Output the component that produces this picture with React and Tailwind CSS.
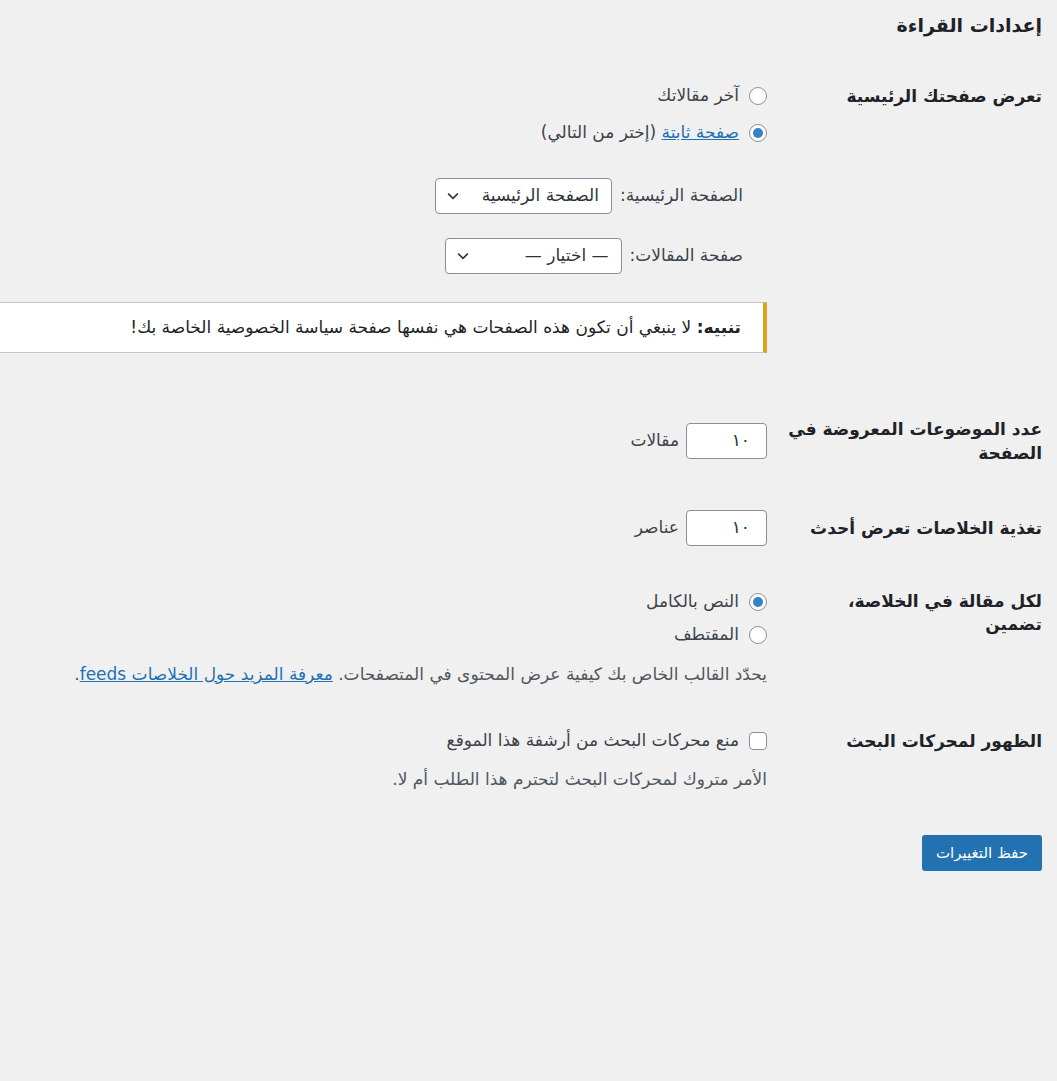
import { useState } from "react";

function Radio({ checked }) {
  return (
    <span className="w-[18px] h-[18px] shrink-0 rounded-full border border-[#8c8f94] bg-white flex items-center justify-center">
      {checked && <span className="w-[10px] h-[10px] rounded-full bg-[#3582c4]"></span>}
    </span>
  );
}

function Chevron() {
  return (
    <svg className="w-[16px] h-[16px]" viewBox="0 0 20 20" fill="none" stroke="#2c3338" strokeWidth={2}>
      <path d="M4 7l6 6 6-6" />
    </svg>
  );
}

function Select({ value, width }) {
  return (
    <div
      className={`h-[36px] ${width} border border-[#8c8f94] rounded-[4px] bg-white flex items-center justify-between pr-[12px] pl-[9px] text-[#2c3338]`}
    >
      <span>{value}</span>
      <Chevron />
    </div>
  );
}

export default function App() {
  const [front, setFront] = useState("page");

  return (
    <div
      dir="rtl"
      className="min-h-[1081px] bg-[#f0f0f1] pr-[15px] text-[17px] text-[#3c434a] font-['DejaVu_Sans',sans-serif]"
    >
      {/* Header */}
      <div className="pt-[10px]">
        <h1 className="h-[30px] leading-[30px] text-[19px] font-bold text-[#1d2327]">إعدادات القراءة</h1>
      </div>

      {/* Row: front page */}
      <div className="flex mt-[44px]">
        <div className="w-[264px] shrink-0 pl-[10px] leading-[24px] font-bold text-[#1d2327]">
          تعرض صفحتك الرئيسية
        </div>
        <div className="flex-1 pr-[11px]">
          <label className="h-[24px] flex items-center gap-[10px]" onClick={() => setFront("posts")}>
            <Radio checked={front === "posts"} />
            <span>آخر مقالاتك</span>
          </label>
          <label className="h-[24px] mt-[13px] flex items-center gap-[10px]" onClick={() => setFront("page")}>
            <Radio checked={front === "page"} />
            <span>
              <a className="text-[#2271b1] underline">صفحة ثابتة</a> (إختر من التالي)
            </span>
          </label>

          <div className="pr-[24px]">
            <div className="mt-[33px] flex items-center gap-[8px]">
              <span>الصفحة الرئيسية:</span>
              <Select value="الصفحة الرئيسية" width="w-[177px]" />
            </div>
            <div className="mt-[24px] flex items-center gap-[8px]">
              <span>صفحة المقالات:</span>
              <Select value="— اختيار —" width="w-[177px]" />
            </div>
          </div>

          <div className="mt-[28px] h-[51px] bg-white border-y border-[#c3c4c7] border-r-[4px] border-r-[#dba617] flex items-center pr-[22px] text-[#1d2327]">
            <p>
              <strong>تنبيه:</strong> لا ينبغي أن تكون هذه الصفحات هي نفسها صفحة سياسة الخصوصية الخاصة بك!
            </p>
          </div>
        </div>
      </div>

      {/* Row: posts per page */}
      <div className="flex mt-[64px]">
        <div className="w-[264px] shrink-0 pl-[10px] leading-[24px] font-bold text-[#1d2327]">
          عدد الموضوعات المعروضة في الصفحة
        </div>
        <div className="flex-1 pr-[11px] pt-[6px]">
          <div className="flex items-center gap-[7px]">
            <div className="w-[81px] h-[36px] border border-[#8c8f94] rounded-[4px] bg-white flex items-center pr-[16px] text-[#2c3338]">
              ١٠
            </div>
            <span>مقالات</span>
          </div>
        </div>
      </div>

      {/* Row: feed items */}
      <div className="flex mt-[45px]">
        <div className="w-[264px] shrink-0 pl-[10px] pt-[6px] leading-[24px] font-bold text-[#1d2327]">
          تغذية الخلاصات تعرض أحدث
        </div>
        <div className="flex-1 pr-[11px]">
          <div className="flex items-center gap-[7px]">
            <div className="w-[81px] h-[36px] border border-[#8c8f94] rounded-[4px] bg-white flex items-center pr-[16px] text-[#2c3338]">
              ١٠
            </div>
            <span>عناصر</span>
          </div>
        </div>
      </div>

      {/* Row: feed content */}
      <div className="flex mt-[44px]">
        <div className="w-[264px] shrink-0 pl-[10px] leading-[23px] font-bold text-[#1d2327]">
          لكل مقالة في الخلاصة، تضمين
        </div>
        <div className="flex-1 pr-[11px]">
          <label className="h-[24px] flex items-center gap-[10px]">
            <Radio checked />
            <span>النص بالكامل</span>
          </label>
          <label className="h-[24px] mt-[9px] flex items-center gap-[10px]">
            <Radio />
            <span>المقتطف</span>
          </label>
          <p className="mt-[15px] leading-[24px] text-[#50575e]">
            يحدّد القالب الخاص بك كيفية عرض المحتوى في المتصفحات.{" "}
            <a className="text-[#2271b1] underline">معرفة المزيد حول الخلاصات feeds</a>.
          </p>
        </div>
      </div>

      {/* Row: search engines */}
      <div className="flex mt-[43px]">
        <div className="w-[264px] shrink-0 pl-[10px] leading-[24px] font-bold text-[#1d2327]">
          الظهور لمحركات البحث
        </div>
        <div className="flex-1 pr-[11px]">
          <label className="h-[24px] flex items-center gap-[10px]">
            <span className="w-[18px] h-[18px] shrink-0 rounded-[4px] border border-[#8c8f94] bg-white"></span>
            <span>منع محركات البحث من أرشفة هذا الموقع</span>
          </label>
          <p className="mt-[14px] leading-[24px] text-[#50575e]">
            الأمر متروك لمحركات البحث لتحترم هذا الطلب أم لا.
          </p>
        </div>
      </div>

      {/* Submit */}
      <div className="mt-[44px]">
        <button className="h-[36px] w-[120px] rounded-[3px] bg-[#2271b1] text-white text-[15px]">
          حفظ التغييرات
        </button>
      </div>
    </div>
  );
}
